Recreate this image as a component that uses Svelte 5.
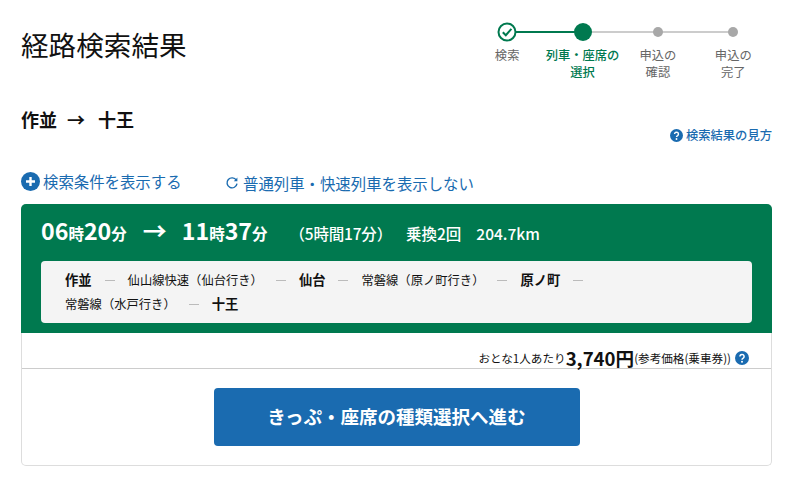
<script>
	const steps = [
		{ label: ['検索'], state: 'done' },
		{ label: ['列車・座席の', '選択'], state: 'current' },
		{ label: ['申込の', '確認'], state: 'todo' },
		{ label: ['申込の', '完了'], state: 'todo' }
	];
</script>

<div class="page">
	<header class="top">
		<h1>経路検索結果</h1>
		<ol class="steps">
			{#each steps as step, i}
				<li class="step {step.state}">
					<span class="track">
						{#if i > 0}<span class="line left"></span>{/if}
						{#if i < steps.length - 1}<span class="line right"></span>{/if}
						{#if step.state === 'done'}
							<svg class="check" width="20" height="20" viewBox="0 0 20 20">
								<circle cx="10" cy="10" r="8.5" fill="#fff" stroke="#00794f" stroke-width="2" />
								<path d="M5.8 10.2l3 3 5.6-6.4" fill="none" stroke="#00794f" stroke-width="2" />
							</svg>
						{:else}
							<span class="dot"></span>
						{/if}
					</span>
					{#each step.label as line}
						<span class="label">{line}</span>
					{/each}
				</li>
			{/each}
		</ol>
	</header>

	<div class="route-row">
		<h2>作並<span class="arrow">→</span>十王</h2>
		<a class="help-link" href="#help">
			<svg width="13" height="13" viewBox="0 0 14 14">
				<circle cx="7" cy="7" r="7" fill="#1a6bb0" />
				<path d="M4.9 5.4a2.1 2 0 1 1 3.3 1.7c-.8.5-1.2.9-1.2 1.6" fill="none" stroke="#fff" stroke-width="1.5" />
				<circle cx="7" cy="10.8" r="1" fill="#fff" />
			</svg>
			検索結果の見方
		</a>
	</div>

	<div class="filters">
		<a class="filter-show" href="#show">
			<svg width="19" height="19" viewBox="0 0 19 19">
				<circle cx="9.5" cy="9.5" r="9.5" fill="#1a6bb0" />
				<path d="M9.5 5v9M5 9.5h9" stroke="#fff" stroke-width="2.4" />
			</svg>
			検索条件を表示する
		</a>
		<a class="filter-local" href="#local">
			<svg width="14" height="14" viewBox="0 0 14 14">
				<path d="M11.3 4.2A5 5 0 1 0 12 7.6" fill="none" stroke="#1a6bb0" stroke-width="1.4" />
				<path d="M12.4 1.6v3.6H8.8z" fill="#1a6bb0" />
			</svg>
			普通列車・快速列車を表示しない
		</a>
	</div>

	<section class="card">
		<div class="summary">
			<div class="times">
				<span class="time"><b>06</b><small>時</small><b>20</b><small>分</small></span>
				<span class="to">→</span>
				<span class="time"><b>11</b><small>時</small><b>37</b><small>分</small></span>
				<span class="meta duration">（5時間17分）</span>
				<span class="meta">乗換2回</span>
				<span class="meta">204.7km</span>
			</div>
			<div class="legs">
				<div class="leg-row">
					<strong>作並</strong><i></i><span>仙山線快速（仙台行き）</span><i></i><strong>仙台</strong><i></i><span>常磐線（原ノ町行き）</span><i></i><strong>原ノ町</strong><i></i>
				</div>
				<div class="leg-row">
					<span>常磐線（水戸行き）</span><i></i><strong>十王</strong>
				</div>
			</div>
		</div>
		<div class="price">
			<span class="per">おとな1人あたり</span><span class="amount">3,740円</span><span class="note">(参考価格(乗車券))</span>
			<svg width="14" height="14" viewBox="0 0 14 14">
				<circle cx="7" cy="7" r="7" fill="#1a6bb0" />
				<path d="M4.9 5.4a2.1 2 0 1 1 3.3 1.7c-.8.5-1.2.9-1.2 1.6" fill="none" stroke="#fff" stroke-width="1.5" />
				<circle cx="7" cy="10.8" r="1" fill="#fff" />
			</svg>
		</div>
		<div class="action">
			<button type="button">きっぷ・座席の種類選択へ進む</button>
		</div>
	</section>
</div>

<style>
	:global(body) {
		margin: 0;
		background: #fff;
	}

	.page {
		width: 751px;
		height: 499px;
		margin-left: 21px;
		font-family: "Noto Sans CJK JP", "Noto Sans", sans-serif;
		color: #111;
		overflow: hidden;
	}

	.top {
		display: flex;
		justify-content: space-between;
		height: 100px;
	}

	h1 {
		margin: 25px 0 0;
		font-size: 27.6px;
		line-height: 38px;
		font-weight: 400;
	}

	.steps {
		display: flex;
		list-style: none;
		margin: 22px 1px 0 0;
		padding: 0;
	}

	.step {
		display: flex;
		flex-direction: column;
		align-items: center;
		width: 75.4px;
		font-size: 12.3px;
		line-height: 17px;
		color: #666;
	}

	.step.current .label {
		color: #00794f;
		font-weight: 500;
	}

	.track {
		position: relative;
		display: flex;
		align-items: center;
		justify-content: center;
		width: 100%;
		height: 20px;
		margin-bottom: 5px;
	}

	.line {
		position: absolute;
		top: 9px;
		width: 50%;
		height: 2px;
		background: #ccc;
	}

	.line.left {
		left: 0;
	}

	.line.right {
		right: 0;
	}

	.done .line,
	.current .line.left {
		background: #00794f;
	}

	.check {
		position: relative;
	}

	.dot {
		position: relative;
		width: 10px;
		height: 10px;
		border-radius: 50%;
		background: #a8a8a8;
	}

	.current .dot {
		width: 18px;
		height: 18px;
		background: #00794f;
	}

	.route-row {
		display: flex;
		justify-content: space-between;
		height: 65px;
	}

	h2 {
		margin: 6px 0 0;
		font-size: 18px;
		line-height: 26px;
		font-weight: 700;
	}

	.arrow {
		margin: 0 13px 0 10px;
	}

	a {
		color: #1a6bb0;
		text-decoration: none;
	}

	.help-link {
		display: flex;
		align-items: center;
		gap: 3px;
		height: 18px;
		margin-top: 26px;
		font-size: 12.3px;
		font-weight: 500;
	}

	.filters {
		display: flex;
		height: 39px;
		font-size: 15.4px;
		line-height: 22px;
	}

	.filter-show {
		display: flex;
		align-items: center;
		gap: 3px;
		height: 22px;
		margin-top: 5px;
		width: 204px;
	}

	.filter-local {
		display: flex;
		align-items: center;
		gap: 4px;
		height: 22px;
		margin-top: 7px;
	}

	.card {
		height: 262px;
		box-sizing: border-box;
		border: 1px solid #ddd;
		border-top: 0;
		border-radius: 5px;
	}

	.summary {
		margin: 0 -1px;
		height: 129px;
		box-sizing: border-box;
		padding: 0 20px;
		background: #00794f;
		border-radius: 5px 5px 0 0;
		color: #fff;
	}

	.times {
		display: flex;
		align-items: baseline;
		height: 57px;
		padding-top: 11px;
		box-sizing: border-box;
		line-height: 30px;
		font-size: 15.5px;
		font-weight: 500;
	}

	.time b {
		font-size: 23.2px;
		font-weight: 700;
	}

	.time small {
		font-size: 15.5px;
		font-weight: 700;
	}

	.to {
		margin: 0 15px 0 16px;
		font-size: 24px;
		font-weight: 700;
	}

	.meta {
		margin-left: 15px;
	}

	.meta.duration {
		margin-left: 22px;
		margin-right: -1px;
		letter-spacing: -0.2px;
	}

	.legs {
		box-sizing: border-box;
		height: 62px;
		padding: 7px 24px;
		background: #f4f4f4;
		border-radius: 4px;
		color: #111;
		font-size: 12.3px;
		line-height: 24px;
	}

	.leg-row {
		display: flex;
		align-items: center;
		height: 24px;
	}

	.leg-row strong {
		font-size: 13.3px;
		font-weight: 700;
	}

	.leg-row i {
		width: 10px;
		height: 1px;
		margin: 0 13px;
		background: #bbb;
	}

	.price {
		display: flex;
		align-items: center;
		justify-content: flex-end;
		height: 36px;
		box-sizing: border-box;
		padding: 14px 22px 0 0;
		border-bottom: 1px solid #ccc;
		font-size: 11.6px;
	}

	.amount {
		font-size: 18.6px;
		font-weight: 700;
	}

	.note {
		margin-right: 4px;
		font-size: 11.6px;
	}

	.action {
		display: flex;
		justify-content: center;
		padding-top: 19px;
	}

	button {
		width: 366px;
		height: 58px;
		padding: 0 0 2px;
		border: 0;
		border-radius: 4px;
		background: #1a6bb0;
		color: #fff;
		font: 700 18.5px "Noto Sans CJK JP", "Noto Sans", sans-serif;
	}
</style>
